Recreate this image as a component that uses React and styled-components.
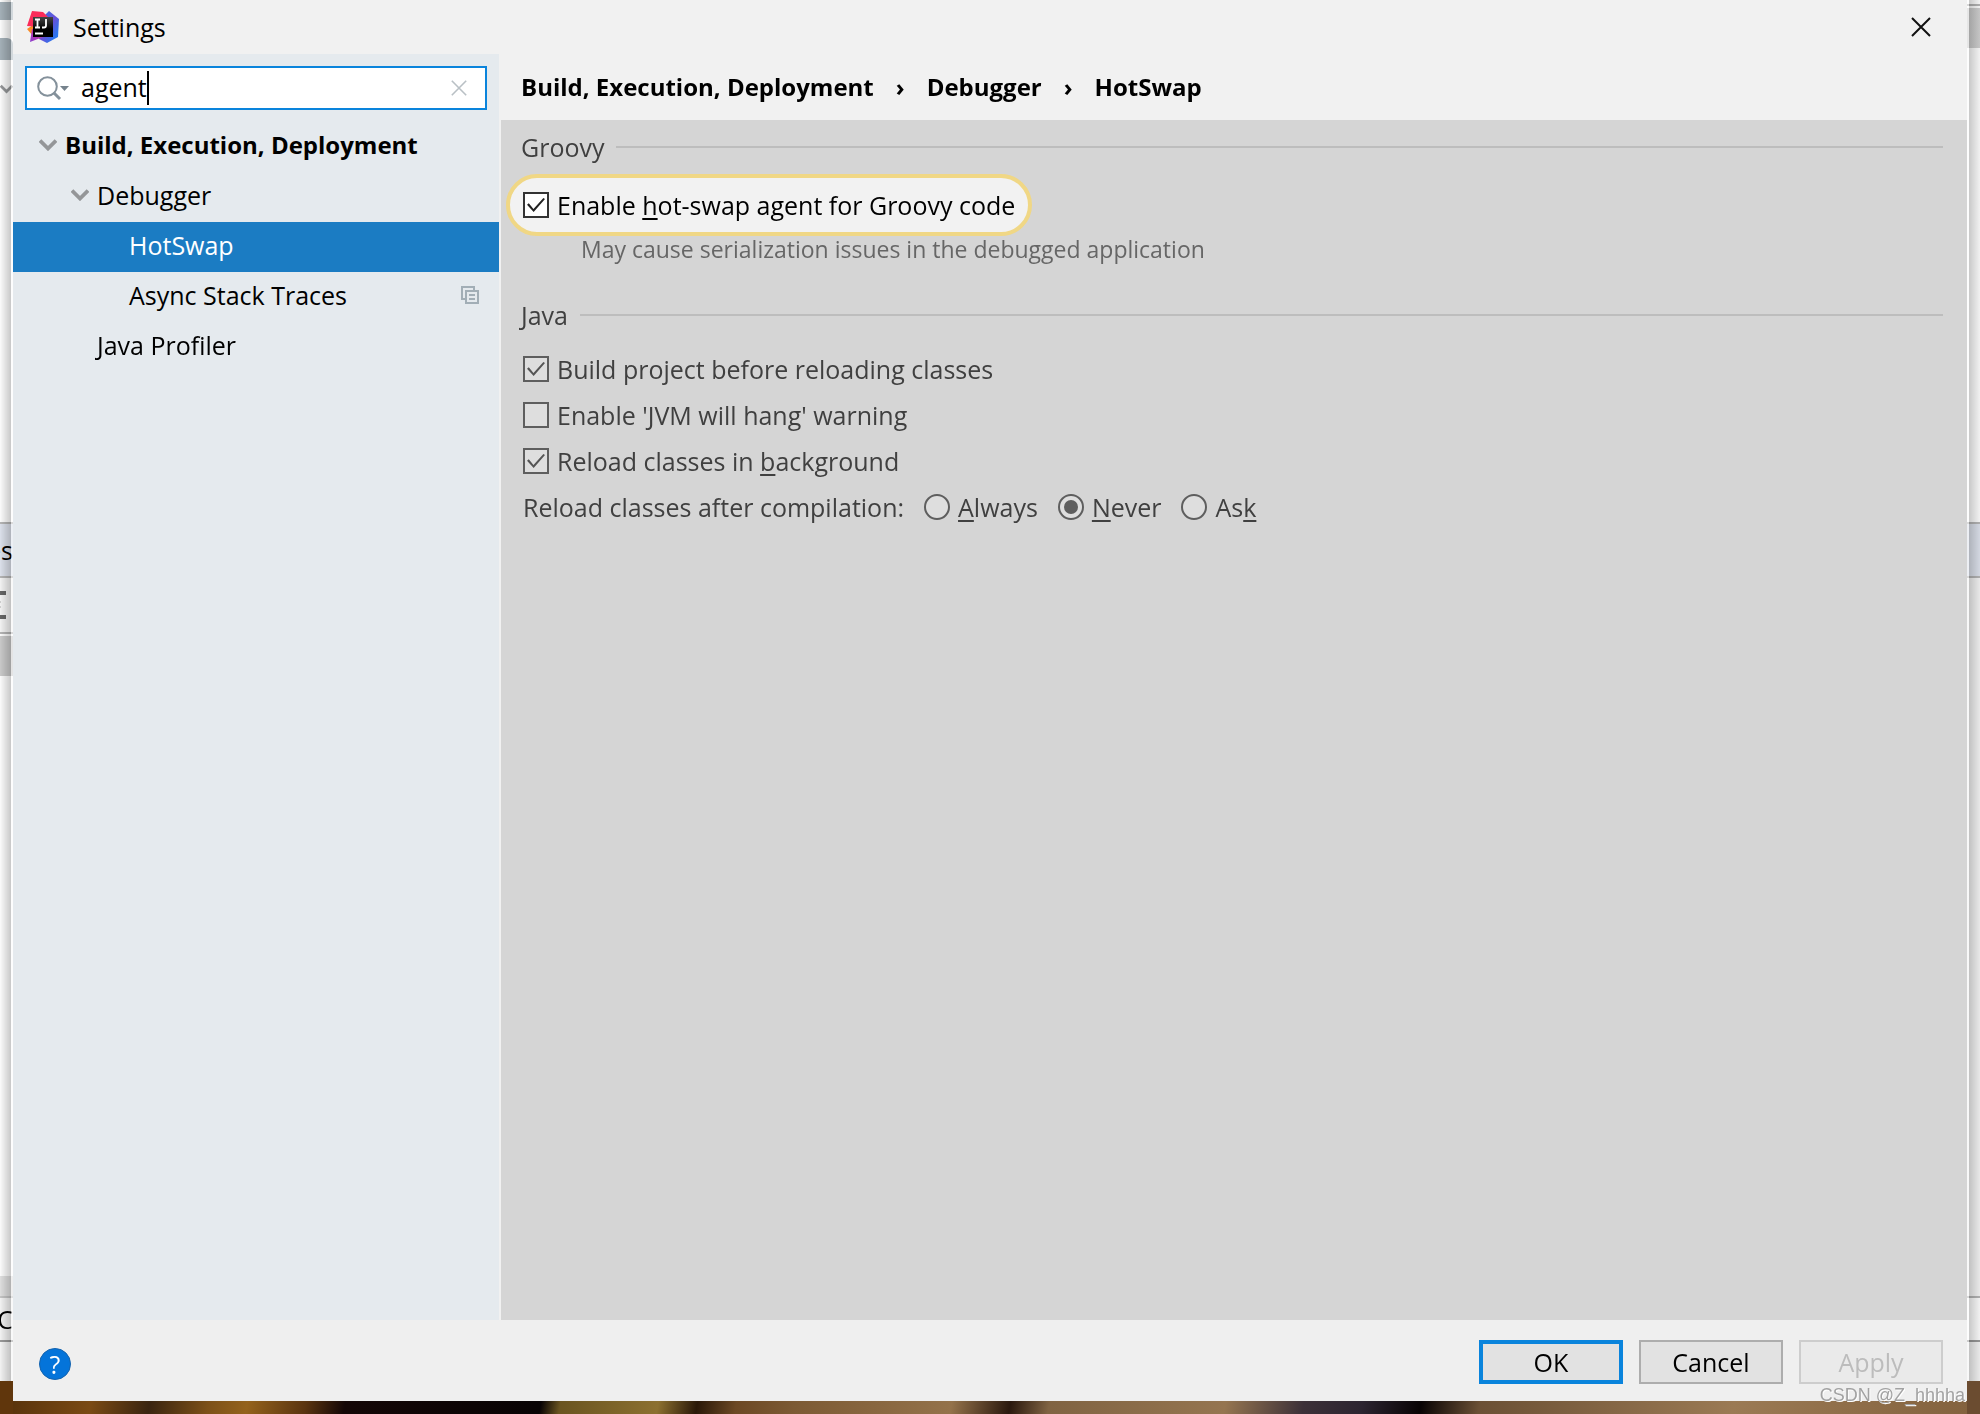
import { useEffect, useRef, useState } from 'react';
import styled, { createGlobalStyle } from 'styled-components';

const GlobalStyle = createGlobalStyle`
  *, *::before, *::after {
    box-sizing: border-box;
  }

  body {
    margin: 0;
    background: #ffffff;
    color: #000000;
    font-family: 'Open Sans', 'Noto Sans', sans-serif;
    font-size: 25px;
    line-height: 32px;
  }

  button, input {
    font: inherit;
    color: inherit;
  }
`;

const Desktop = styled.div`
  display: grid;
  grid-template-columns: 13px minmax(0, 1fr) 13px;
  grid-template-rows: 1fr 13px;
  min-height: 100vh;
`;

const Edge = styled.div`
  grid-row: 1 / 3;
  grid-column: ${p => (p.$side === 'left' ? 1 : 3)};
  display: flex;
  flex-direction: column;
  overflow: hidden;
  position: relative;

  &::after {
    content: '';
    position: absolute;
    inset: 0 0 33px;
    background: ${p =>
      p.$side === 'left'
        ? 'linear-gradient(to right, rgba(0,0,0,0) 0, rgba(0,0,0,0.2) 11px, rgba(255,255,255,0.5) 11px)'
        : 'linear-gradient(to left, rgba(0,0,0,0.04) 0, rgba(0,0,0,0.2) 11px, rgba(255,255,255,0.5) 11px)'};
  }
`;

const Band = styled.div`
  flex: ${p => (p.$h ? `0 0 ${p.$h}px` : '1 0 0')};
  background: ${p => p.$bg || '#fbfbfb'};
  border-radius: ${p => (p.$round ? '0 6px 0 0' : '0')};
  display: flex;
  align-items: center;
  justify-content: flex-end;
  white-space: nowrap;
`;

const Wallpaper = styled.div`
  grid-column: 2;
  grid-row: 2;
  background: linear-gradient(
    100deg,
    #5a340c 0%, #7a4a14 4%, #3a2410 7%, #7c5018 10%, #94621c 12%, #5a3410 15%,
    #140606 17%, #080304 27%, #6a5420 28%, #8c7030 33%, #2a1808 35%,
    #6c4824 37%, #7c5a34 40%, #94724a 48%, #2a180e 51%, #806342 53%, #957550 62%,
    #3c3038 66%, #2c2430 69%, #080304 72%, #6b5035 75%, #9b7a54 88%, #83623e 100%
  );
`;

const Dialog = styled.div`
  grid-column: 2;
  grid-row: 1;
  display: flex;
  flex-direction: column;
  background: #f1f1f1;
`;

const TitleBar = styled.header`
  display: flex;
  align-items: center;
  gap: 14px;
  height: 54px;
  padding: 0 36px 0 14px;
`;

const Title = styled.h1`
  flex: 1;
  margin: 0;
  font-size: 25px;
  font-weight: 400;
`;

const IconButton = styled.button`
  display: flex;
  margin-left: auto;
  padding: 0;
  border: 0;
  background: none;
`;

const Main = styled.div`
  flex: 1;
  display: grid;
  grid-template-columns: 486px minmax(0, 1fr);
  column-gap: 2px;
`;

const Sidebar = styled.aside`
  padding-top: 12px;
  background: #e5eaee;
`;

const SearchBox = styled.label`
  display: flex;
  align-items: center;
  height: 44px;
  margin: 0 12px 12px;
  padding: 0 18px 0 10px;
  border: 2px solid #0a84dc;
  background: #ffffff;
`;

const SearchInput = styled.input`
  field-sizing: content;
  min-width: 1px;
  max-width: 340px;
  height: 32px;
  margin: 0 0 2px 11px;
  padding: 0;
  border: 0;
  outline: 0;
  background: none;
  caret-color: transparent;
`;

const Caret = styled.span`
  width: 2px;
  height: 34px;
  background: #000000;
`;

const Tree = styled.ul`
  margin: 0;
  padding: 0;
  list-style: none;
`;

const TreeRow = styled.li`
  display: flex;
  align-items: center;
  gap: 8px;
  height: 50px;
  padding: 0 20px 4px ${p => p.$indent}px;
  font-size: ${p => (p.$bold ? 24 : 25)}px;
  font-weight: ${p => (p.$bold ? 700 : 400)};
  background: ${p => (p.$active ? '#1b7cc3' : 'transparent')};
  color: ${p => (p.$active ? '#ffffff' : '#000000')};
`;

const TreeLabel = styled.span`
  flex: 1;
  white-space: nowrap;
`;

const Panel = styled.section`
  display: flex;
  flex-direction: column;
`;

const Breadcrumbs = styled.nav`
  display: flex;
  align-items: center;
  gap: 22px;
  height: 66px;
  padding: 0 20px 0 20px;
  font-size: 24px;
  font-weight: 700;
`;

const Content = styled.div`
  flex: 1;
  padding: 11px 24px 0 20px;
  background: #d5d5d5;
  color: #404040;
`;

const SectionTitle = styled.h2`
  display: flex;
  align-items: center;
  gap: 12px;
  margin: 0;
  font-size: 25px;
  font-weight: 400;

  &::after {
    content: '';
    flex: 1;
    height: 2px;
    background: #bdbdbd;
  }
`;

const Spotlight = styled.div`
  display: flex;
  align-items: center;
  width: fit-content;
  height: 62px;
  margin: 11px 0 0 -15px;
  padding: 0 13px;
  border: 4px solid #f0d785;
  border-radius: 31px;
  background: #f2f2f2;
  color: #000000;
`;

const Hint = styled.p`
  margin: -3px 0 34px 60px;
  color: #666666;
  font-size: 23px;
`;

const Options = styled.div`
  display: flex;
  flex-direction: column;
  gap: 14px;
  padding: 22px 0 0 2px;
`;

const OptionRow = styled.div`
  display: flex;
  align-items: center;
  gap: 20px;
`;

const OptionLabel = styled.label`
  display: flex;
  align-items: center;
  gap: 8px;
  white-space: nowrap;

  u {
    text-decoration-thickness: 2px;
    text-underline-offset: 3px;
    text-decoration-skip-ink: none;
  }
`;

const Check = styled.input`
  appearance: none;
  flex: none;
  display: grid;
  place-items: center;
  width: 26px;
  height: 26px;
  margin: 0;
  border: 2px solid ${p => (p.$lit ? '#333333' : '#5e5e5e')};
  border-radius: ${p => (p.type === 'radio' ? '50%' : '0')};
  background: ${p => (p.$lit ? '#ffffff' : '#dedede')};

  &[type='checkbox']:checked::before {
    content: '';
    width: 18px;
    height: 14px;
    background: ${p => (p.$lit ? '#222222' : '#555555')};
    clip-path: polygon(0 48%, 10% 38%, 36% 78%, 91% 0, 100% 8%, 37% 100%);
  }

  &[type='radio']:checked::before {
    content: '';
    width: 14px;
    height: 14px;
    border-radius: 50%;
    background: #5e5e5e;
  }
`;

const Footer = styled.footer`
  display: flex;
  align-items: center;
  gap: 16px;
  height: 81px;
  padding: 3px 24px 0 26px;
  background: #efefef;
`;

const HelpButton = styled.button`
  width: 32px;
  height: 32px;
  margin: 4px auto 0 0;
  padding: 0;
  border: 1px solid #1463ae;
  border-radius: 50%;
  background: #0474da;
  color: #ffffff;
  line-height: 28px;
`;

const Button = styled.button`
  width: 144px;
  height: 44px;
  padding: 0;
  border: ${p => (p.$primary ? '4px solid #0a84dc' : '2px solid #adadad')};
  background: #e2e2e2;
  line-height: 32px;

  &:disabled {
    border-color: #cdcdcd;
    background: #eaeaea;
    color: #bcbcbc;
  }
`;

const Watermark = styled.span`
  position: absolute;
  right: 15px;
  bottom: 7px;
  color: #a2a2a2;
  font-family: 'Liberation Sans', sans-serif;
  font-size: 18px;
  line-height: 24px;
  text-shadow: 1px 1px 0 #ffffff;
`;

function Logo() {
  return (
    <svg width="32" height="32" viewBox="0 0 32 32" aria-hidden="true">
      <defs>
        <linearGradient id="blue" x1="0" y1="0" x2="1" y2="1">
          <stop offset="0" stopColor="#2b7de9" />
          <stop offset="0.5" stopColor="#6a50d8" />
          <stop offset="0.8" stopColor="#2a75ee" />
        </linearGradient>
        <linearGradient id="violet" x1="0" y1="1" x2="1" y2="0">
          <stop offset="0" stopColor="#8a3fd0" />
          <stop offset="1" stopColor="#e0348f" />
        </linearGradient>
        <linearGradient id="dark" x1="0" y1="0" x2="0" y2="1">
          <stop offset="0" stopColor="#454545" />
          <stop offset="0.6" stopColor="#000000" />
        </linearGradient>
      </defs>
      <path d="M16 6 22 0 32 8 31 26 20 32 12 28Z" fill="url(#blue)" />
      <path d="M6 14 0 18 6 25Z" fill="#f98a25" />
      <path d="M5 0 16 1 21 6 12 16 0 15Z" fill="#fb2c5a" />
      <path d="M5 18 3 31 16 26 10 18Z" fill="url(#violet)" />
      <rect x="6" y="6" width="20" height="20" fill="url(#dark)" />
      <path
        d="M8 8.500h5M10.500 8.500v8M8 16.500h5M19 8v6.500q0 2-2 2h-2M8 22.500h8"
        fill="none"
        stroke="#ffffff"
        strokeWidth="1.800"
      />
    </svg>
  );
}

function Chevron() {
  return (
    <svg width="18" height="12" viewBox="0 0 18 12" aria-hidden="true">
      <path d="M1 1.500 9 9.500 17 1.500" fill="none" stroke="#949698" strokeWidth="3.800" />
    </svg>
  );
}

function SearchIcon() {
  return (
    <svg width="33" height="26" viewBox="0 0 33 26" aria-hidden="true">
      <circle cx="10.500" cy="11.500" r="9.300" fill="none" stroke="#84919b" strokeWidth="2" />
      <path d="M16.500 17.500 23 24" stroke="#84919b" strokeWidth="3" />
      <path d="M23 11h9l-4.500 5Z" fill="#76838d" />
    </svg>
  );
}

function Cross({ size, color, weight }) {
  return (
    <svg width={size} height={size} viewBox="0 0 20 20" aria-hidden="true">
      <path d="M1 1 19 19M19 1 1 19" stroke={color} strokeWidth={weight} />
    </svg>
  );
}

function CopyIcon() {
  return (
    <svg width="18" height="18" viewBox="0 0 18 18" aria-hidden="true">
      <path d="M4 13H1V1h12v3M5 5h12v12H5ZM8 9h6M8 13h6" fill="none" stroke="#a2aeb6" strokeWidth="2" />
    </svg>
  );
}

function Option({ children, ...rest }) {
  return (
    <OptionLabel>
      <Check {...rest} />
      <span>{children}</span>
    </OptionLabel>
  );
}

const rows = [
  { label: 'Build, Execution, Deployment', indent: 26, open: true, bold: true },
  { label: 'Debugger', indent: 58, open: true },
  { label: 'HotSwap', indent: 116, active: true },
  { label: 'Async Stack Traces', indent: 116, copy: true },
  { label: 'Java Profiler', indent: 84 },
];

export default function App() {
  const [query, setQuery] = useState('agent');
  const searchRef = useRef(null);

  useEffect(() => {
    const input = searchRef.current;
    input.focus();
    input.setSelectionRange(input.value.length, input.value.length);
  }, []);

  return (
    <>
      <GlobalStyle />
      <Desktop>
        <Edge $side="left">
          <Band $h={2} />
          <Band $h={18} $bg="#a4b0b8" />
          <Band $h={18} />
          <Band $h={22} $bg="#a4b0b8" $round />
          <Band $h={18} />
          <Band $h={22}>
            <Chevron />
          </Band>
          <Band $h={422} />
          <Band $h={2} $bg="#b4b4b4" />
          <Band $h={52} $bg="#dbe0ea">es</Band>
          <Band $h={2} $bg="#b4b4b4" />
          <Band $h={54} $bg="#f2f2f2">
            <svg width="13" height="30" viewBox="0 0 13 30" aria-hidden="true">
              <path d="M0 3h6M0 27h6" stroke="#666666" strokeWidth="4" />
              <path d="M0 12h1M0 17h1" stroke="#aaaaaa" />
            </svg>
          </Band>
          <Band $h={2} $bg="#b4b4b4" />
          <Band $h={2} />
          <Band $h={40} $bg="#c9c9c9" />
          <Band />
          <Band $h={20} $bg="#dedede" />
          <Band $h={2} $bg="#c4c4c4" />
          <Band $h={42} $bg="#f2f2f2">TC</Band>
          <Band $h={2} $bg="#999999" />
          <Band $h={39} $bg="#f2f2f2" />
          <Band $h={33} $bg="#60360c" />
        </Edge>

        <Dialog role="dialog" aria-label="Settings">
          <TitleBar>
            <Logo />
            <Title>Settings</Title>
            <IconButton aria-label="Close">
              <Cross size={20} color="#111111" weight={2} />
            </IconButton>
          </TitleBar>

          <Main>
            <Sidebar>
              <SearchBox>
                <SearchIcon />
                <SearchInput
                  ref={searchRef}
                  aria-label="Search settings"
                  value={query}
                  onChange={e => setQuery(e.target.value)}
                />
                <Caret />
                <IconButton aria-label="Clear search" onClick={() => setQuery('')}>
                  <Cross size={16} color="#b9c0c5" weight={2} />
                </IconButton>
              </SearchBox>
              <Tree>
                {rows.map(row => (
                  <TreeRow
                    key={row.label}
                    $indent={row.indent}
                    $bold={row.bold}
                    $active={row.active}
                  >
                    {row.open && <Chevron />}
                    <TreeLabel>{row.label}</TreeLabel>
                    {row.copy && <CopyIcon />}
                  </TreeRow>
                ))}
              </Tree>
            </Sidebar>

            <Panel>
              <Breadcrumbs>
                <span>Build, Execution, Deployment</span>
                <span>›</span>
                <span>Debugger</span>
                <span>›</span>
                <span>HotSwap</span>
              </Breadcrumbs>
              <Content>
                <SectionTitle>Groovy</SectionTitle>
                <Spotlight>
                  <Option type="checkbox" defaultChecked $lit>
                    Enable <u>h</u>ot-swap agent for Groovy code
                  </Option>
                </Spotlight>
                <Hint>May cause serialization issues in the debugged application</Hint>

                <SectionTitle>Java</SectionTitle>
                <Options>
                  <Option type="checkbox" defaultChecked>
                    Build project before reloading classes
                  </Option>
                  <Option type="checkbox">Enable 'JVM will hang' warning</Option>
                  <Option type="checkbox" defaultChecked>
                    Reload classes in <u>b</u>ackground
                  </Option>
                  <OptionRow>
                    <span>Reload classes after compilation:</span>
                    <Option type="radio" name="reload">
                      <u>A</u>lways
                    </Option>
                    <Option type="radio" name="reload" defaultChecked>
                      <u>N</u>ever
                    </Option>
                    <Option type="radio" name="reload">
                      As<u>k</u>
                    </Option>
                  </OptionRow>
                </Options>
              </Content>
            </Panel>
          </Main>

          <Footer>
            <HelpButton aria-label="Help">?</HelpButton>
            <Button $primary>OK</Button>
            <Button>Cancel</Button>
            <Button disabled>Apply</Button>
          </Footer>
        </Dialog>

        <Edge $side="right">
          <Band $h={4} />
          <Band $h={2} $bg="#b4b4b4" />
          <Band $h={2} />
          <Band $h={40} $bg="#cdcdcd" />
          <Band $h={474} />
          <Band $h={2} $bg="#b4b4b4" />
          <Band $h={52} $bg="#dbe0ea" />
          <Band $h={2} $bg="#b4b4b4" />
          <Band $bg="#f2f2f2" />
          <Band $h={2} $bg="#b4b4b4" />
          <Band $h={42} $bg="#fbfbfb" />
          <Band $h={2} $bg="#999999" />
          <Band $h={39} $bg="#f2f2f2" />
          <Band $h={33} $bg="#6b4c30" />
        </Edge>
        <Wallpaper />
      </Desktop>
      <Watermark>CSDN @Z_hhhha</Watermark>
    </>
  );
}
